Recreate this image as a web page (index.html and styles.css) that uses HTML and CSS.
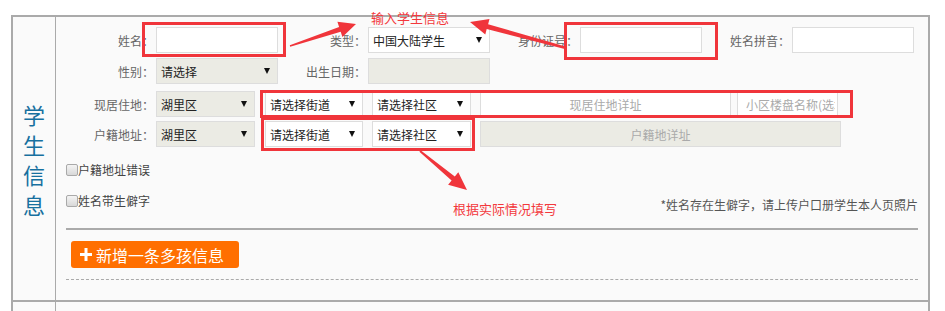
FILE: index.html
```html
<!DOCTYPE html>
<html>
<head>
  <meta charset="utf-8">
  <title>学生信息</title>
  <link rel="stylesheet" href="styles.css">
</head>
<body>
  <div class="sheet">
    <div class="block">
      <div class="side"><span class="side-title">学生信息</span></div>
      <div class="main">
        <div class="line">
          <label class="lbl">姓名：</label>
          <input class="fld" type="text">
          <label class="lbl">类型：</label>
          <span class="sel fld"><span class="sel-text">中国大陆学生</span><i class="caret"></i></span>
          <label class="lbl">身份证号：</label>
          <input class="fld" type="text">
          <label class="lbl">姓名拼音：</label>
          <input class="fld" type="text">
        </div>
        <div class="line">
          <label class="lbl">性别：</label>
          <span class="sel fld off"><span class="sel-text">请选择</span><i class="caret"></i></span>
          <label class="lbl">出生日期：</label>
          <input class="fld off" type="text" disabled>
        </div>
        <div class="line addr">
          <label class="lbl">现居住地：</label>
          <span class="sel off w-area"><span class="sel-text">湖里区</span><i class="caret"></i></span>
          <span class="sel w-street"><span class="sel-text">请选择街道</span><i class="caret"></i></span>
          <span class="sel w-comm"><span class="sel-text">请选择社区</span><i class="caret"></i></span>
          <input class="fld w-detail" type="text" placeholder="现居住地详址">
          <input class="fld w-estate" type="text" placeholder="小区楼盘名称(选填)">
        </div>
        <div class="line addr">
          <label class="lbl">户籍地址：</label>
          <span class="sel off w-area"><span class="sel-text">湖里区</span><i class="caret"></i></span>
          <span class="sel w-street"><span class="sel-text">请选择街道</span><i class="caret"></i></span>
          <span class="sel w-comm"><span class="sel-text">请选择社区</span><i class="caret"></i></span>
          <input class="fld off w-long" type="text" placeholder="户籍地详址" disabled>
        </div>
        <div class="check-line first">
          <span class="cb"></span><span class="cb-text">户籍地址错误</span>
        </div>
        <div class="check-line">
          <span class="cb"></span><span class="cb-text">姓名带生僻字</span>
          <span class="note">*姓名存在生僻字，请上传户口册学生本人页照片</span>
        </div>
        <div class="rule"></div>
        <button class="add-btn">
          <svg width="12" height="13" viewBox="0 0 12 13"><rect x="4.5" y="0" width="3" height="13" fill="#fff"/><rect x="0" y="5" width="12" height="3" fill="#fff"/></svg>
          <span>新增一条多孩信息</span>
        </button>
        <div class="dash"></div>
      </div>
    </div>
    <div class="block next">
      <div class="side"></div>
      <div class="main"></div>
    </div>
  </div>

  <!-- 标注 -->
  <div class="mark box-a"></div>
  <div class="mark box-b"></div>
  <div class="mark box-c"></div>
  <div class="mark box-d"></div>
  <span class="mark-text tip-top">输入学生信息</span>
  <span class="mark-text tip-bottom">根据实际情况填写</span>
  <svg class="arrows" width="945" height="311" viewBox="0 0 945 311">
    <polygon points="289.8,45.2 339.1,27 337.4,21.8 356,24 342.4,37 340.7,31.8 290.2,46.8"/>
    <polygon points="566.3,46.8 488.1,24.3 489.5,19 470,22 485.3,34.4 486.7,29.1 565.7,49.2"/>
    <polygon points="420.6,150.2 454.8,176.6 458.3,172.3 467,190 448.1,184.7 451.6,180.4 419.4,151.8"/>
  </svg>
</body>
</html>
```

FILE: styles.css
```css
/* 学生信息表 */
html, body {
  margin: 0;
  overflow: hidden;
}
body {
  position: relative;
  background: #fff;
  font-family: "Noto Sans CJK SC", "Liberation Sans", sans-serif;
  font-size: 12px;
  color: #333;
}
.sheet {
  box-sizing: border-box;
  width: 919px;
  margin: 15px 0 0 11px;
  border: 2px solid #aaa;
  border-bottom: none;
  background: #fafafa;
}
.block {
  display: flex;
  border-bottom: 2px solid #aaa;
}
.block.next {
  height: 9px;
  border-bottom: none;
}
.side {
  width: 42px;
  border-right: 1px solid #aaa;
  display: flex;
  align-items: center;
  justify-content: center;
}
.side-title {
  width: 22px;
  font-size: 22px;
  line-height: 30px;
  color: #17709f;
  text-align: center;
}
.main {
  flex: 1;
  padding: 10px 10px 20px 10px;
}
.block.next .main {
  padding: 0;
}

/* 表单行 */
.line {
  display: flex;
  align-items: center;
  height: 26px;
}
.line + .line {
  margin-top: 5px;
}
.line.addr {
  margin-top: 7px;
}
.line.addr + .line.addr {
  margin-top: 4px;
}
.lbl {
  width: 88px;
  margin-right: 2px;
  text-align: right;
  color: #666;
  white-space: nowrap;
}
.fld {
  box-sizing: border-box;
  width: 122px;
  height: 26px;
  margin: 0;
  padding: 0 4px;
  border: 1px solid #ddd;
  background: #fff;
  font-family: inherit;
  font-size: 12px;
  color: #333;
  outline: none;
}
.fld.off {
  background: #ebebe4;
}
.fld::placeholder {
  color: #aaa;
}
.sel {
  box-sizing: border-box;
  display: flex;
  align-items: center;
  height: 26px;
  padding: 0 7px 0 4px;
  border: 1px solid #ddd;
  background: #fff;
  color: #222;
}
.sel.off {
  background: #ebebe4;
}
.sel-text {
  flex: 1;
  white-space: nowrap;
}
.caret {
  width: 0;
  height: 0;
  border-left: 3px solid transparent;
  border-right: 3px solid transparent;
  border-top: 6px solid #111;
}
.w-area {
  width: 99px;
  margin-right: 10px;
}
.w-street {
  width: 98px;
  margin-right: 9px;
}
.w-comm {
  width: 99px;
  margin-right: 9px;
}
.w-detail {
  width: 251px;
  margin-right: 6px;
  text-align: center;
}
.w-estate {
  width: 101px;
  padding: 0 2px 0 8px;
}
.w-long {
  width: 361px;
  text-align: center;
}

/* 勾选 */
.check-line {
  display: flex;
  align-items: flex-start;
  margin-top: 13px;
}
.check-line.first {
  margin-top: 14px;
}
.cb {
  box-sizing: border-box;
  width: 12px;
  height: 12px;
  margin-top: 3px;
  border: 1px solid #a9a9a9;
  border-radius: 2px;
  background: linear-gradient(#f4f4f4, #d8d8d8);
}
.cb-text {
  line-height: 18px;
  color: #444;
}
.note {
  margin-left: auto;
  margin-top: 4px;
  line-height: 18px;
  color: #555;
}
.rule {
  margin-top: 14px;
  border-top: 2px solid #aaa;
}
.add-btn {
  display: flex;
  align-items: center;
  gap: 4px;
  box-sizing: border-box;
  width: 168px;
  height: 27px;
  margin: 11px 0 0 5px;
  padding: 0 0 0 9px;
  border: none;
  border-radius: 3px;
  background: #ff6f00;
  color: #fff;
  font-family: inherit;
  font-size: 16px;
  cursor: pointer;
}
.dash {
  margin-top: 11px;
  border-top: 1px dashed #aaa;
}

/* 标注 */
.mark {
  position: absolute;
  box-sizing: border-box;
  border: 3px solid #f0353b;
}
.box-a { left: 142px; top: 22px; width: 144px; height: 35px; }
.box-b { left: 564px; top: 22px; width: 154px; height: 38px; }
.box-c { left: 260px; top: 90px; width: 593px; height: 28px; }
.box-d { left: 261px; top: 117px; width: 214px; height: 34px; }
.mark-text {
  position: absolute;
  font-size: 13px;
  line-height: 16px;
  color: #f3383c;
}
.tip-top { left: 371px; top: 10px; }
.tip-bottom { left: 453px; top: 201px; }
.arrows {
  position: absolute;
  left: 0;
  top: 0;
  fill: #f0353b;
}
```
